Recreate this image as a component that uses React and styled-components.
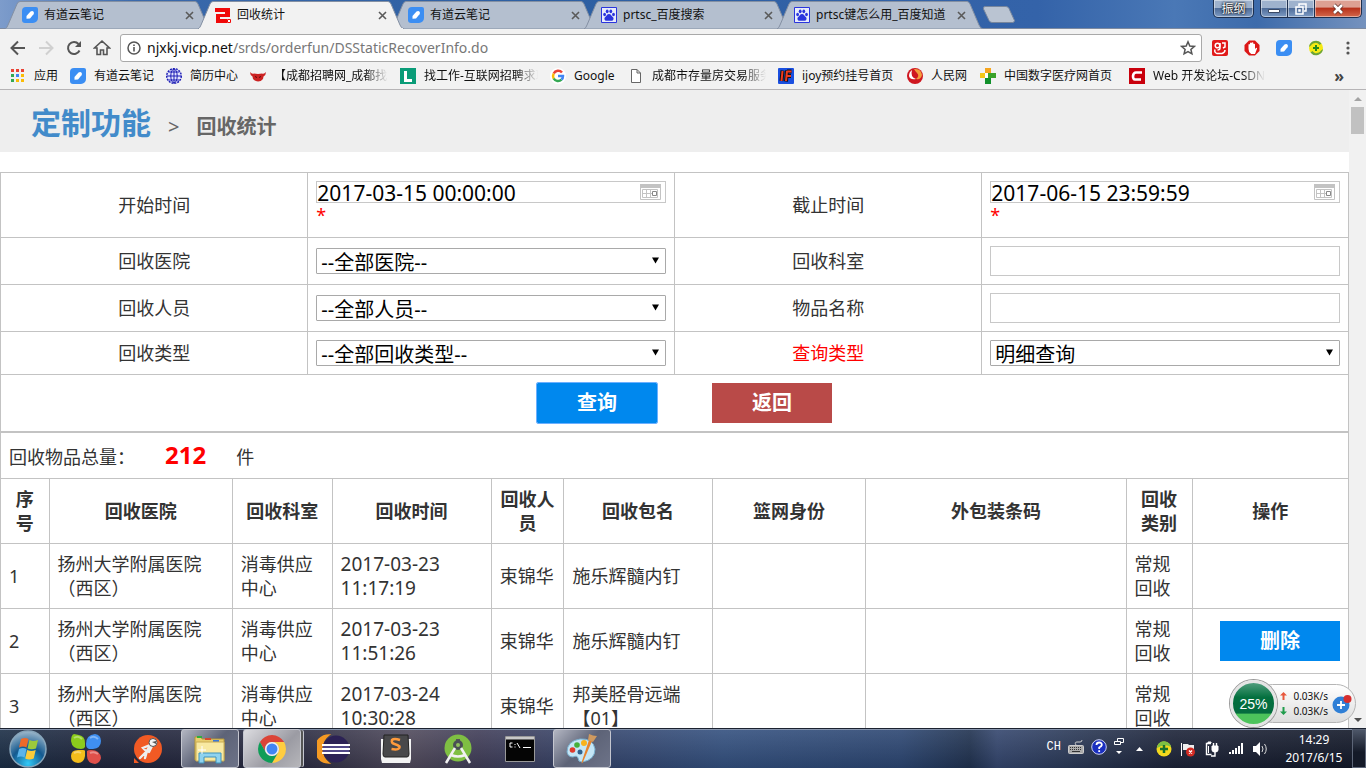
import React from "react";
import styled, { createGlobalStyle, css } from "styled-components";

const uiFont = '"Noto Sans", "Noto Sans CJK SC", sans-serif';

const GlobalStyle = createGlobalStyle`
  *, *::before, *::after { box-sizing: border-box; }
  body { margin: 0; font-family: ${uiFont}; color: #333; background: #fff; }
  button, input, select { font-family: inherit; margin: 0; }
  svg { display: block; flex: none; }
`;

const Screen = styled.div`
  position: relative;
  display: flex;
  flex-direction: column;
  height: 100vh;
  overflow: hidden;
`;

/* ---------- browser chrome ---------- */

const TitleBar = styled.header`
  display: flex;
  align-items: flex-start;
  height: 29px;
  padding: 1px 4px 0 5px;
  flex: none;
  background: linear-gradient(to right, #7d9ccb 0%, #3a69ab 10%, #2d5fa2 40%, #3463a9 76%, #4a78b6 86%, #3d6bab 92%, #7592be 100%);
  border-bottom: 1px solid #7d8aa0;
`;

const TabList = styled.nav`
  display: flex;
  height: 28px;
`;

const Tab = styled.div`
  position: relative;
  z-index: ${(p) => (p.$active ? 2 : 1)};
  display: flex;
  align-items: center;
  width: 206px;
  height: 28px;
  margin-right: -13px;
  padding: 0 14px 0 17px;
`;

const TabShape = styled.svg`
  position: absolute;
  inset: 0;
  z-index: -1;
`;

const TabTitle = styled.a`
  flex: 1;
  min-width: 0;
  margin-left: 6px;
  overflow: hidden;
  white-space: nowrap;
  font-size: 12px;
  line-height: 20px;
  color: #111;
  text-decoration: none;
`;

const IconButton = styled.button`
  display: flex;
  align-items: center;
  justify-content: center;
  width: ${(p) => p.$w || 28}px;
  height: ${(p) => p.$h || 28}px;
  padding: 0;
  border: 0;
  background: none;
  flex: none;
`;

const NewTab = styled(IconButton)`
  margin-left: 12px;
`;

const CaptionButtons = styled.div`
  display: flex;
  margin-left: auto;
  margin-top: -1px;
`;

const captionLook = css`
  display: flex;
  align-items: center;
  justify-content: center;
  height: 18px;
  padding: 0;
  color: #fff;
  border: 1px solid #1d2f4e;
  border-top: 0;
  box-shadow: inset 0 0 0 1px rgba(255, 255, 255, 0.45);
  background: linear-gradient(#9eb2cd 0 45%, #4f6d99 50%, #7d9bc4);
`;

const UserButton = styled.button`
  ${captionLook}
  width: 41px;
  margin-right: 7px;
  border-radius: 0 0 5px 5px;
  font-size: 12px;
  line-height: 16px;
  text-shadow: 0 0 2px #000, 0 0 3px #000;
`;

const CaptionButton = styled.button`
  ${captionLook}
  width: ${(p) => (p.$close ? 48 : 28)}px;
  margin-left: -1px;
  border-radius: ${(p) => (p.$close ? "0 0 5px 0" : p.$first ? "0 0 0 5px" : "0")};
  ${(p) => p.$close && "background: linear-gradient(#dda092 0 40%, #b8331c 50%, #d3684b);"}
`;

const Toolbar = styled.div`
  display: flex;
  align-items: center;
  height: 34px;
  padding: 3px 2px 0 4px;
  flex: none;
  background: #f2f2f2;
`;

const AddressBox = styled.div`
  display: flex;
  align-items: center;
  flex: 1;
  height: 28px;
  margin: 0 2px 0 4px;
  padding: 0 5px 0 6px;
  background: #fff;
  border: 1px solid #a9a9a9;
  border-radius: 3px;
`;

const Address = styled.a`
  flex: 1;
  margin-left: 6px;
  font-size: 14px;
  line-height: 24px;
  color: #777;
  text-decoration: none;
  white-space: nowrap;
`;

const Host = styled.span`
  color: #111;
`;

const Bookmarks = styled.nav`
  display: flex;
  align-items: center;
  height: 27px;
  padding: 0 22px 0 10px;
  flex: none;
  background: #f2f2f2;
  border-bottom: 1px solid #b6b4b6;
`;

const Bookmark = styled.a`
  display: flex;
  align-items: center;
  gap: 8px;
  width: ${(p) => p.$w}px;
  padding-right: 12px;
  color: #111;
  font-size: 12px;
  line-height: 20px;
  text-decoration: none;
  white-space: nowrap;
`;

const BookmarkText = styled.span`
  min-width: 0;
  overflow: hidden;
  ${(p) => p.$fade && "mask-image: linear-gradient(to right, #000 80%, transparent 100%);"}
`;

const MoreBookmarks = styled.button`
  margin-left: auto;
  padding: 0;
  border: 0;
  background: none;
  color: #444;
  font-size: 16px;
  font-weight: 700;
  line-height: 16px;
`;

/* ---------- web page ---------- */

const Viewport = styled.div`
  display: flex;
  flex: 1;
  min-height: 0;
`;

const Page = styled.main`
  flex: 1;
  min-width: 0;
  overflow: hidden;
`;

const ScrollTrack = styled.div`
  display: flex;
  flex-direction: column;
  align-items: center;
  width: 17px;
  background: #f1f1f1;
`;

const ScrollThumb = styled.div`
  width: 13px;
  height: 27px;
  background: #c1c1c1;
`;

const ScrollSpace = styled.div`
  flex: 1;
`;

const Crumbs = styled.div`
  display: flex;
  align-items: baseline;
  height: 62px;
  margin-bottom: 20px;
  padding: 13px 31px 0;
  background: #eee;
  color: #666;
  font-size: 20px;
  line-height: 40px;
`;

const CrumbHome = styled.a`
  margin-right: 17px;
  color: #428bca;
  font-size: 30px;
  font-weight: 700;
  text-decoration: none;
`;

const CrumbHere = styled.h1`
  margin: 0 0 0 17px;
  font-size: 20px;
  font-weight: 700;
`;

const SearchForm = styled.form`
  margin: 0;
`;

const Grid = styled.table`
  width: 100%;
  table-layout: fixed;
  border-collapse: collapse;
  font-size: 18px;
  line-height: 24px;

  th, td {
    border: 1px solid #c3c3c3;
    padding: 8px;
  }
`;

const FieldRow = styled.tr`
  height: ${(p) => p.$h}px;
`;

const LabelCell = styled.td`
  text-align: center;
  color: ${(p) => (p.$alert ? "#f00" : "#333")};
`;

const FieldCell = styled.td`
  && { padding-top: 0; padding-bottom: 0; }
`;

const fieldLook = css`
  display: block;
  width: 100%;
  border: 1px solid #c8c8c8;
  border-radius: 0;
  background: #fff;
  color: #000;
`;

const TextInput = styled.input`
  ${fieldLook}
  height: 30px;
  padding: 2px 6px;
  font-size: 20px;
`;

const Overlay = styled.div`
  position: relative;

  svg {
    position: absolute;
    right: ${(p) => p.$right}px;
    top: ${(p) => p.$top}px;
    pointer-events: none;
  }
`;

const DateInput = styled.input`
  ${fieldLook}
  height: 22px;
  padding: 1px 0 0;
  font-size: 21px;
`;

const Required = styled.div`
  height: 26px;
  color: #f00;
`;

const Select = styled.select`
  ${fieldLook}
  appearance: none;
  height: 26px;
  padding: 2px 20px 0 4px;
  border-color: #a9a9a9;
  border-radius: 1px;
  font-size: 20px;
  line-height: 24px;
`;

const Actions = styled.div`
  display: flex;
  justify-content: center;
  gap: 55px;
  padding-left: 20px;
`;

const ActionButton = styled.button`
  width: 120px;
  height: 40px;
  padding: 0;
  border: 0;
  background: ${(p) => (p.$danger ? "#b94a48" : "#08e")};
  color: #fff;
  font-size: 20px;
  font-weight: 700;
  line-height: 40px;
  ${(p) => p.$focused && "outline: 1px solid #6cb0ff; border-radius: 1px;"}
`;

const Records = styled(Grid)`
  th { font-weight: 700; }
`;

const Total = styled.strong`
  margin: 0 30px;
  color: #f00;
  font-size: 24px;
`;

const DateCell = styled.td`
  font-size: 19px;
`;

const OpCell = styled.td`
  && { padding-top: 0; padding-bottom: 0; }

  button { display: block; margin-left: auto; }
`;

/* ---------- network monitor ---------- */

const Monitor = styled.aside`
  position: absolute;
  right: 10px;
  bottom: 40px;
  display: flex;
  align-items: center;
  height: 49px;
`;

const MonitorPill = styled.div`
  display: flex;
  align-items: center;
  justify-content: flex-end;
  gap: 4px;
  width: 103px;
  height: 39px;
  margin-left: -24px;
  padding-right: 3px;
  border: 1px solid #b5b5b5;
  border-radius: 20px;
  background: linear-gradient(#fff, #ddd);
  color: #111;
  font-size: 10px;
  line-height: 15px;
`;

const Speed = styled.div`
  display: flex;
  align-items: center;
  gap: 6px;
`;

const Gauge = styled.div`
  position: relative;
  display: flex;
  align-items: center;
  justify-content: center;
  z-index: 1;
  width: 47px;
  height: 47px;
  border: 3px solid #e4e4e4;
  border-radius: 50%;
  box-shadow: 0 0 0 1px #999;
  background: linear-gradient(#4f9d7c, #04703f 35%, #056b3f 74%, #4cc35b 75%);
  color: #fff;
  font: 14px "Liberation Sans", sans-serif;
`;

/* ---------- taskbar ---------- */

const Taskbar = styled.footer`
  display: flex;
  height: 40px;
  flex: none;
  border-top: 1px solid #1b2230;
  box-shadow: inset 0 1px 0 #8795ad;
  background:
    linear-gradient(rgba(255, 255, 255, 0.1), rgba(0, 0, 0, 0.12)),
    linear-gradient(to right, #1b2e46 0, #20253c 8%, #2b2c42 22%, #504a5c 30%, #403d58 35%, #34456d 44%, #33507f 53%, #2c4672 66%, #203250 71%, #34466e 73%, #2b3a59 78%, #1c2338 86%, #121828 100%);
`;

const Start = styled.button`
  display: flex;
  align-items: center;
  justify-content: center;
  width: 55px;
  padding: 0;
  border: 0;
  background: none;
`;

const Task = styled.button`
  display: flex;
  align-items: center;
  justify-content: center;
  width: 58px;
  margin: 0 2px;
  padding: 0;
  border: 1px solid ${(p) => (p.$open ? "#c4c6cf" : "transparent")};
  border-radius: 3px;
  background: ${(p) =>
    p.$bright
      ? "linear-gradient(135deg, #dcdce0, #9b9ba3 60%, #b6b6ba)"
      : p.$open
      ? "linear-gradient(135deg, #b3b6c2, #5d6377 50%, #6d7388)"
      : "none"};
  ${(p) => p.$bright && "box-shadow: 3px 0 0 -1px #555, 4px 0 0 -1px #c4c6cf;"}
`;

const Tray = styled.div`
  display: flex;
  align-items: center;
  gap: 8px;
  margin-left: auto;
  color: #fff;
`;

const LanguageBar = styled.div`
  display: flex;
  align-items: center;
  gap: 7px;
  padding-bottom: 4px;
  font: 12px "Liberation Mono", monospace;
`;

const Clock = styled.time`
  width: 76px;
  font-size: 12px;
  line-height: 18px;
  text-align: center;
`;

const ShowDesktop = styled.button`
  align-self: stretch;
  width: 14px;
  margin-left: -8px;
  padding: 0;
  border: 1px solid #5d6678;
  background: linear-gradient(#4d5668, #141a28 60%);
`;

/* ---------- drawings ---------- */

const NoteIcon = () => (
  <svg width="16" height="16" viewBox="0 0 16 16">
    <path d="M4 0h10a2 2 0 0 1 2 2v9a5 5 0 0 1-5 5H3a3 3 0 0 1-3-3V4a4 4 0 0 1 4-4z" fill="#3b8ef3" />
    <path d="M4.500 9 8.500 4.500q2-1 3 .2 1 1.300 0 2.600L8 11.500l-3.500.3z" fill="#fff" />
  </svg>
);

const StampIcon = () => (
  <svg width="16" height="16" viewBox="0 0 16 16">
    <path d="M0 1h15v9H5v2h7v4H1V7h9V5H0z" fill="#f00a0a" />
    <path d="M12.500 12.500h3v3h-3z" fill="#fff" stroke="#f00a0a" />
  </svg>
);

const PawIcon = () => (
  <svg width="16" height="16" viewBox="0 0 16 16">
    <path d="M.5.5h15v15H.5z" fill="#e8ecfb" stroke="#2a35dd" />
    <g fill="#2a35dd">
      <ellipse cx="3.600" cy="7.500" rx="1.400" ry="1.800" />
      <ellipse cx="6.200" cy="4.300" rx="1.400" ry="1.900" />
      <ellipse cx="9.800" cy="4.300" rx="1.400" ry="1.900" />
      <ellipse cx="12.500" cy="7.500" rx="1.400" ry="1.800" />
      <path d="M8 7c2 0 2.500 2 4 3.300 1.300 1.700.200 3.700-1.800 3.500-1.500-.2-2.900-.2-4.400 0-2 .2-3.100-1.800-1.800-3.500C5.500 9 6 7 8 7z" />
    </g>
  </svg>
);

const CloseIcon = () => (
  <svg width="9" height="9" viewBox="0 0 9 9">
    <path d="M1 1l7 7M8 1 1 8" stroke="#5a5a5a" strokeWidth="1.600" />
  </svg>
);

const TabBackground = ({ active }) => (
  <TabShape width="206" height="28" viewBox="0 0 206 28" aria-hidden="true">
    <path
      d="M0 28Q2 27 3 24L12 3Q13 .5 15 .5H190Q192 .5 193 3L202 24Q203 27 206 28z"
      fill={active ? "#f2f2f2" : "#b4bfcf"}
      stroke="#8490a3"
    />
    {active && <path d="M1 28h204" stroke="#f2f2f2" strokeWidth="2" />}
  </TabShape>
);

const navStroke = { fill: "none", stroke: "#555", strokeWidth: 2 };

const BackIcon = () => (
  <svg width="16" height="16" viewBox="0 0 16 16"><path d="M15 8H2M8 1.500 1.500 8 8 14.500" {...navStroke} /></svg>
);
const ForwardIcon = () => (
  <svg width="16" height="16" viewBox="0 0 16 16"><path d="M1 8h13M8 1.500 14.500 8 8 14.500" {...navStroke} stroke="#d0d0d0" /></svg>
);
const ReloadIcon = () => (
  <svg width="16" height="16" viewBox="0 0 16 16">
    <path d="M13.500 10.500A6 6 0 1 1 12.500 4" {...navStroke} />
    <path d="M15 1v6H9z" fill="#555" />
  </svg>
);
const HomeIcon = () => (
  <svg width="18" height="18" viewBox="0 0 18 18"><path d="M4 9v6.500h3.500V11h3v4.500H14V9h2.500L9 2 1.500 9z" {...navStroke} strokeWidth="1.600" /></svg>
);
const InfoIcon = () => (
  <svg width="14" height="14" viewBox="0 0 14 14">
    <circle cx="7" cy="7" r="6" fill="none" stroke="#555" strokeWidth="1.500" />
    <path d="M7 6v4.500M7 3.500v1.500" stroke="#555" strokeWidth="1.600" />
  </svg>
);
const StarIcon = () => (
  <svg width="16" height="16" viewBox="0 0 16 16">
    <path d="M8 1.800 9.800 6l4.500.4-3.400 3 1 4.400L8 11.500l-3.900 2.300 1-4.400-3.400-3L6.200 6z" fill="none" stroke="#555" strokeWidth="1.500" />
  </svg>
);
const WeiboIcon = () => (
  <svg width="16" height="16" viewBox="0 0 16 16">
    <rect width="16" height="16" rx="2" fill="#e11a1a" />
    <g fill="none" stroke="#fff" strokeWidth="1.500">
      <circle cx="5.500" cy="5.500" r="2.300" />
      <path d="M8 3v5q0 2-2.500 2M3 9.500q-1 3 2 4h5q3-1 3-3.500M10 3h3v4l-2 1" />
    </g>
  </svg>
);
const StopHandIcon = () => (
  <svg width="16" height="16" viewBox="0 0 16 16">
    <path d="M5 .500h6L15.500 5v6L11 15.500H5L.500 11V5z" fill="#dc1717" />
    <path d="M4.500 9V4.500q.8-1 1.500 0V3q.8-1 1.700 0v-.5q1-.8 1.700.3V4q1-.8 1.600.2v5l1-1.400q1.500 0 1 1L11 14H7.200Q4.500 12.500 4.500 9z" fill="#fff" />
  </svg>
);
const SafeIcon = () => (
  <svg width="16" height="16" viewBox="0 0 16 16">
    <circle cx="8" cy="8" r="7" fill="#f5ea13" />
    <path d="M1 7a7 7 0 0 1 12.500-3.500L11.500 5A5 5 0 0 0 3 5.500zM15 9a7 7 0 0 1-12.500 3.500L4.500 11a5 5 0 0 0 8.500-.5z" fill="#6aa33b" />
    <path d="M8 5v6M5 8h6" stroke="#258a1e" strokeWidth="2" />
  </svg>
);
const MenuIcon = () => (
  <svg width="4" height="16" viewBox="0 0 4 16" fill="#555"><circle cx="2" cy="3" r="1.600" /><circle cx="2" cy="8" r="1.600" /><circle cx="2" cy="13" r="1.600" /></svg>
);

const appColors = ["#ea4335", "#ea4335", "#ea4335", "#34a853", "#4285f4", "#fbbc05", "#34a853", "#fbbc05", "#fbbc05"];
const AppsIcon = () => (
  <svg width="16" height="16" viewBox="0 0 16 16">
    {appColors.map((c, i) => (
      <rect key={i} x={1 + (i % 3) * 5} y={1 + Math.floor(i / 3) * 5} width="3" height="3" fill={c} />
    ))}
  </svg>
);
const GlobeIcon = () => (
  <svg width="16" height="16" viewBox="0 0 16 16" fill="none" stroke="#1c1cb4">
    <circle cx="8" cy="8" r="7.300" fill="#e4e6ff" strokeDasharray="2 1" strokeWidth="1.400" />
    <ellipse cx="8" cy="8" rx="3.200" ry="7" />
    <path d="M1 8h14M2.500 4h11M2.500 12h11M8 1v14" />
  </svg>
);
const BullIcon = () => (
  <svg width="16" height="16" viewBox="0 0 16 16">
    <path d="M0 4q2 2.500 4 1.500l4 .5 4-.5q2 1 4-1.500 0 3-2.500 4.500L13 11q-2 2.500-5 2.500T3 11l-.5-2.500Q0 7 0 4z" fill="#cc2222" />
    <path d="M5 8.500l2 1M11 8.500 9 9.500" stroke="#5c0a0a" />
  </svg>
);
const LagouIcon = () => (
  <svg width="16" height="16" viewBox="0 0 16 16"><path d="M0 0h16v16H0z" fill="#0a9c78" /><path d="M5.500 3v9.500H12" stroke="#fff" strokeWidth="3" fill="none" /></svg>
);
const GoogleIcon = () => (
  <svg width="16" height="16" viewBox="0 0 16 16" fill="none" strokeWidth="2.500">
    <circle cx="8" cy="8" r="8" fill="#fff" />
    <path d="M12 4.500A5 5 0 0 0 3.700 5.500" stroke="#ea4335" />
    <path d="M3.700 5.500a5 5 0 0 0 0 5" stroke="#fbbc05" />
    <path d="M3.700 10.500a5 5 0 0 0 7.800 1.200" stroke="#34a853" />
    <path d="M11.500 11.700A5 5 0 0 0 13 8H8" stroke="#4285f4" />
  </svg>
);
const DocIcon = () => (
  <svg width="16" height="16" viewBox="0 0 16 16"><path d="M3.500 1.500h5.500l3.500 3.500v9.500h-9zM9 1.500V5h3.500" fill="#fff" stroke="#666" /></svg>
);
const IjoyIcon = () => (
  <svg width="16" height="16" viewBox="0 0 16 16">
    <rect width="16" height="16" rx="1" fill="#1a4fe0" />
    <path d="M4.500 2.500 3.500 13M9 2.500 8 13.500M9 3.500h4.500M9 8h4" stroke="#111" strokeWidth="4" />
    <path d="M4.500 3 3.500 13M9 3 8 13M9 3.500h4.500M9 8h4" stroke="#f03a1c" strokeWidth="2" />
  </svg>
);
const PeopleIcon = () => (
  <svg width="16" height="16" viewBox="0 0 16 16">
    <circle cx="8" cy="8" r="8" fill="#cf1720" />
    <path d="M7 1q7-1 8 6-1 5-6 4 4-3 1-6Q8 3 7 1z" fill="#f39c3c" />
    <path d="M5 2q-2 7 4 9-6 1-7-3 0-4 3-6z" fill="#fff" />
  </svg>
);
const CrossIcon = () => (
  <svg width="16" height="16" viewBox="0 0 16 16">
    <path d="M5 0h6v5H5z" fill="#f7a51c" /><path d="M0 5h8v5H0z" fill="#f3c818" />
    <path d="M8 5h8v5H8z" fill="#3aa22a" /><path d="M5 10h6v6H5z" fill="#11902b" />
    <path d="M5 5h3v5H5z" fill="#fff" />
  </svg>
);
const CsdnIcon = () => (
  <svg width="16" height="16" viewBox="0 0 16 16"><path d="M0 0h16v16H0z" fill="#c9000c" /><path d="M13 4.500H7q-2.500 0-3 3.500 0 3.500 2 3.500h6" fill="none" stroke="#fff" strokeWidth="2.600" /></svg>
);

const CalendarIcon = () => (
  <svg width="21" height="16" viewBox="0 0 21 16" fill="none" stroke="#c3c3c3">
    <path d="M0 0h21v4H0z" fill="#c3c3c3" stroke="none" />
    <path d="M.5 3.500h20v12H.5zM2.500 5.500h15v8h-15zM2.500 9.500h15M6.500 5.500v8M10.500 5.500v8" />
    <path d="M12.500 7.500h4v4h-4z" stroke="#888" fill="#fff" />
  </svg>
);
const DropArrow = () => (
  <svg width="7" height="7" viewBox="0 0 7 7"><path d="M0 .5h7L3.500 6.500z" fill="#000" /></svg>
);
const ScrollArrow = ({ down }) => (
  <svg width="17" height="17" viewBox="0 0 17 17">
    <path d={down ? "M5 7h8l-4 4z" : "M5 11h8L9 7z"} fill={down ? "#505050" : "#a3a3a3"} />
  </svg>
);

const WindowsOrb = () => (
  <svg width="38" height="38" viewBox="0 0 38 38">
    <defs>
      <radialGradient id="orb" cx=".5" cy=".9" r=".9">
        <stop offset="0" stopColor="#31c9f7" /><stop offset=".5" stopColor="#14598f" /><stop offset="1" stopColor="#9fb9cc" />
      </radialGradient>
    </defs>
    <circle cx="19" cy="19" r="18" fill="url(#orb)" stroke="#88a6bb" strokeWidth="1.500" />
    <path d="M12 9q4-2 7.500 0l-2 8.500q-3.500-2-7.500 0z" fill="#ee6a2a" />
    <path d="M20.500 10q4 2 8.500 0l-2 8.500q-4.500 1.500-8.500 0z" fill="#9cca3c" />
    <path d="M10 19q4-2 7.500 0l-2 8.500q-3.500-2-7.500 0z" fill="#5bb4ea" />
    <path d="M18.200 20q4 2 8.500 0l-2 8.500q-4.500 2-8.500 0z" fill="#fccc3a" />
  </svg>
);
const PetalsIcon = () => (
  <svg width="32" height="32" viewBox="0 0 32 32">
    <path d="M1 8Q1 2 4 1l5 1q6 1 6 8v4q-1 2-4 2Q2 16 1 8z" fill="#8ccc1c" />
    <path d="M16 11q0-9 9-10 6 1 6 7 0 7-8 8h-4q-3-1-3-5z" fill="#3f8ff0" />
    <path d="M15 18v5q-1 7-7 7-7-1-7-7 0-6 7-6h5q2 0 2 1z" fill="#f4bd1b" />
    <path d="M17 18q1-1 4-1 9 0 10 8-1 5-6 6-8-1-8-8z" fill="#e0504a" />
    <path d="M4 5q4-3 8 1M20 5q4-3 8 1M4 20q4-2 7 0M20 20q4-2 8 1" stroke="#fff" strokeOpacity=".35" strokeWidth="2" fill="none" />
  </svg>
);
const PostmanIcon = () => (
  <svg width="30" height="30" viewBox="0 0 30 30">
    <circle cx="15" cy="15" r="14" fill="#f15a24" /><path d="M1 24v5h5z" fill="#f15a24" />
    <g stroke="#eee" strokeWidth="2.400" strokeLinecap="round" fill="none">
      <path d="M17 11 10 14l2 2M17 12l-4 6-6 6M14 17l-2 7M19 12l-3 6" />
    </g>
    <circle cx="20" cy="8.500" r="4" fill="#f5f5f5" stroke="#555" /><path d="m19 8 4-1v3z" fill="#555" />
  </svg>
);
const ExplorerIcon = () => (
  <svg width="34" height="32" viewBox="0 0 34 32">
    <path d="M2 4h6l1 2h22v21H2z" fill="#e9ce6f" stroke="#b49639" />
    <path d="M4 3h5v2H4z" fill="#2fae3e" /><path d="M12 5h6v2h-6z" fill="#d6482e" /><path d="M20 7h6v2h-6z" fill="#3b78d8" />
    <path d="M3 9h28v19H3z" fill="#f8e9a2" stroke="#c9ac55" />
    <path d="M6 30V20h22v10h-5v-6H11v6z" fill="#8fd3ef" stroke="#3f93bd" />
    <path d="M9 13v8M5 17h8" stroke="#fff" />
  </svg>
);
const ChromeIcon = () => (
  <svg width="32" height="32" viewBox="0 0 32 32">
    <path d="M3.900 9A14 14 0 0 1 28.100 9L16 9A7 7 0 0 0 9.900 19.500Z" fill="#db4437" />
    <path d="M28.100 9A14 14 0 0 1 16 30L22.100 19.500A7 7 0 0 0 16 9Z" fill="#ffcd40" />
    <path d="M16 30A14 14 0 0 1 3.900 9L9.900 19.500A7 7 0 0 0 22.100 19.500Z" fill="#0f9d58" />
    <circle cx="16" cy="16" r="7" fill="#f1f1f1" /><circle cx="16" cy="16" r="5.500" fill="#4285f4" />
  </svg>
);
const EclipseIcon = () => (
  <svg width="34" height="32" viewBox="0 0 34 32">
    <path d="M12 2A14 14 0 0 0 12 30Q5 25 5 16T12 2z" fill="#f59a23" stroke="#f59a23" strokeWidth="1.500" />
    <circle cx="19" cy="16" r="13.500" fill="#2c2255" />
    <path d="M5 12h28M5 16h28M5 20h28" stroke="#fff" strokeWidth="2" />
    <path d="M6 14h26M6 18h26" stroke="#5d5599" strokeWidth="1.500" />
  </svg>
);
const SublimeIcon = () => (
  <svg width="32" height="30" viewBox="0 0 32 30">
    <path d="M1 5h30v20l-1 4H2l-1-4z" fill="#f3f3f3" /><path d="M4 1h24l1 19q0 3-2 3H5q-2 0-2-3z" fill="#48484a" stroke="#222" />
    <path d="M20 6q-6-2-8 0-1 3 2.500 4t5 2.500q.5 4-8 2.500" stroke="#ff9a3c" strokeWidth="2.500" fill="none" />
  </svg>
);
const StudioIcon = () => (
  <svg width="30" height="30" viewBox="0 0 30 30">
    <circle cx="15" cy="14" r="13.500" fill="#7fbf43" />
    <path d="M15 5v4" stroke="#555" strokeWidth="4" /><circle cx="15" cy="11" r="3.500" fill="#8fbf5b" stroke="#4a4f55" strokeWidth="3" />
    <path d="m12 14-9 15M18 14l9 15M8 21q7 3 14 0" stroke="#f1f1f1" strokeWidth="2.500" fill="none" />
  </svg>
);
const ConsoleIcon = () => (
  <svg width="30" height="26" viewBox="0 0 30 26">
    <path d="M.5.500h29v25H.5z" fill="#050505" stroke="#999" /><path d="M1 1h28v2.500H1z" fill="#c9c9c9" />
    <path d="M7.500 7H5v4h2.500M10 8v1M10 10.500v1M12 7l3 5M18 11.500h8" stroke="#fff" fill="none" />
  </svg>
);
const PaintIcon = () => (
  <svg width="32" height="32" viewBox="0 0 32 32">
    <path d="M14 6q13-1 15 10 0 11-13 13-4 0-4-4-1-3-5-1-5 0-6-5Q1 8 14 6z" fill="#c4e6f6" stroke="#79b0cf" />
    <circle cx="6.500" cy="17" r="2.800" fill="#e03b2c" /><circle cx="11" cy="12" r="2.800" fill="#45b03b" />
    <circle cx="18" cy="10" r="3" fill="#f8b21c" /><circle cx="14" cy="19" r="2.500" fill="#30618d" />
    <path d="m26 8-9 21q-2 3-1-1l7-21z" fill="#e8832c" /><path d="m22 7 1-6q4 2 8 2l-4 6z" fill="#cf9a5f" />
  </svg>
);

const KeyboardIcon = () => (
  <svg width="16" height="16" viewBox="0 0 16 16" fill="none" stroke="#ccc">
    <path d="M8 6Q6 3 9 3h3q2 0 2-2" /><rect x=".5" y="6.500" width="15" height="8" rx="1" fill="#aaa" />
    <path d="M2 8.500h12M2 10.500h12" stroke="#333" strokeDasharray="1 1" /><path d="M4 12.500h8" stroke="#333" />
  </svg>
);
const HelpIcon = () => (
  <svg width="16" height="16" viewBox="0 0 16 16">
    <circle cx="8" cy="8" r="7.300" fill="#1a2fc0" stroke="#c9cff2" />
    <path d="M5.500 6q0-2.500 2.700-2.500T10.800 6Q10.500 7.500 8.200 8.500V10M8.200 11.300v1.700" stroke="#fff" strokeWidth="1.800" fill="none" />
  </svg>
);
const RestoreBarIcon = () => (
  <svg width="10" height="20" viewBox="0 0 10 20">
    <path d="M3.500 4V1.500h6v4H7M.5 4.500h6v3h-6z" fill="none" stroke="#fff" /><path d="M2 14h6l-3 3z" fill="#fff" />
  </svg>
);
const ShowHiddenIcon = () => (
  <svg width="16" height="16" viewBox="0 0 16 16"><path d="M4 10h7L7.500 6z" fill="#fff" /></svg>
);
const TraySafeIcon = () => (
  <svg width="16" height="16" viewBox="0 0 16 16">
    <circle cx="8" cy="8" r="7.500" fill="#f3d91d" /><path d="M1 7a7 7 0 0 1 10-6q4 2 4 5-6-4-14 1z" fill="#7bc043" />
    <path d="M8 4v8M4 8h8" stroke="#17722a" strokeWidth="2.500" />
  </svg>
);
const FlagIcon = () => (
  <svg width="16" height="16" viewBox="0 0 16 16">
    <path d="M1 2h1v13H1z" fill="#fff" /><path d="M3 3h5l1 1h5v6H8L7 9H3z" fill="#eee" />
    <circle cx="10.500" cy="11" r="4.500" fill="#d22b23" /><path d="m9 9.500 3 3m0-3-3 3" stroke="#fff" strokeWidth="1.400" />
  </svg>
);
const PlugIcon = () => (
  <svg width="16" height="16" viewBox="0 0 16 16" fill="none" stroke="#fff">
    <path d="M4 1h3v1H4z" fill="#fff" /><path d="M7 2.500H2.500v11h5" strokeWidth="1.400" /><path d="M4.500 5v7" />
    <path d="M8 5h6v4q0 2-3 2t-3-2z" fill="#fff" /><path d="M9.500 2v3M12.500 2v3M11 11v4H7" strokeWidth="1.400" />
  </svg>
);
const SignalIcon = () => (
  <svg width="16" height="16" viewBox="0 0 16 16" fill="#fff"><path d="M1 11h2v2H1zM4 9h2v4H4zM7 7h2v6H7zM10 5h2v8h-2zM13 2h2v11h-2z" /></svg>
);
const SpeakerIcon = () => (
  <svg width="16" height="16" viewBox="0 0 16 16">
    <path d="M1 5h3l4-4v14l-4-4H1z" fill="#fff" /><path d="M10 5q2 3 0 6M12.500 3q3.500 5 0 10" stroke="#ddd" fill="none" />
  </svg>
);
const SpeedArrow = ({ up }) => (
  <svg width="7" height="8" viewBox="0 0 7 8">
    <path d={up ? "M3.500 0 7 3.500H4.500V8h-2V3.500H0z" : "M3.500 8 0 4.500h2.500V0h2v4.500H7z"} fill={up ? "#e8583d" : "#1f9c4c"} />
  </svg>
);
const PlusBadge = () => (
  <svg width="20" height="20" viewBox="0 0 20 20">
    <circle cx="9" cy="11" r="8.500" fill="#2f7fd6" /><path d="M9 7v8M5 11h8" stroke="#fff" strokeWidth="1.800" />
    <circle cx="15.500" cy="5" r="4" fill="#d62f2f" />
  </svg>
);

/* ---------- data ---------- */

const tabs = [
  { title: "有道云笔记", Icon: NoteIcon },
  { title: "回收统计", Icon: StampIcon, active: true },
  { title: "有道云笔记", Icon: NoteIcon },
  { title: "prtsc_百度搜索", Icon: PawIcon },
  { title: "prtsc键怎么用_百度知道", Icon: PawIcon },
];

const bookmarks = [
  { text: "应用", w: 60, Icon: AppsIcon },
  { text: "有道云笔记", w: 96, Icon: NoteIcon },
  { text: "简历中心", w: 84, Icon: GlobeIcon },
  { text: "【成都招聘网_成都找工作", w: 150, Icon: BullIcon, fade: true },
  { text: "找工作-互联网招聘求职", w: 150, Icon: LagouIcon, fade: true },
  { text: "Google", w: 78, Icon: GoogleIcon },
  { text: "成都市存量房交易服务", w: 150, Icon: DocIcon, fade: true },
  { text: "ijoy预约挂号首页", w: 129, Icon: IjoyIcon },
  { text: "人民网", w: 73, Icon: PeopleIcon },
  { text: "中国数字医疗网首页", w: 149, Icon: CrossIcon },
  { text: "Web 开发论坛-CSDN", w: 150, Icon: CsdnIcon, fade: true },
];

const columns = [
  ["序号", 3.6],
  ["回收医院", 13.6],
  ["回收科室", 7.4],
  ["回收时间", 11.8],
  ["回收人员", 5.4],
  ["回收包名", 11.0],
  ["篮网身份", 11.4],
  ["外包装条码", 19.3],
  ["回收类别", 4.9],
  ["操作", 11.6],
];

const records = [
  { time: "2017-03-23 11:17:19", pack: "施乐辉髓内钉" },
  { time: "2017-03-23 11:51:26", pack: "施乐辉髓内钉", removable: true },
  { time: "2017-03-24 10:30:28", pack: "邦美胫骨远端【01】" },
];

const tasks = [
  { name: "云桌面", Icon: PetalsIcon },
  { name: "Postman", Icon: PostmanIcon },
  { name: "资源管理器", Icon: ExplorerIcon, open: true },
  { name: "Chrome", Icon: ChromeIcon, open: true, bright: true },
  { name: "Eclipse", Icon: EclipseIcon },
  { name: "Sublime Text", Icon: SublimeIcon },
  { name: "Android Studio", Icon: StudioIcon },
  { name: "命令提示符", Icon: ConsoleIcon },
  { name: "画图", Icon: PaintIcon, open: true },
];

/* ---------- composed parts ---------- */

const Label = ({ id, children, alert }) => (
  <LabelCell $alert={alert}>
    <label htmlFor={id}>{children}</label>
  </LabelCell>
);

const DateField = ({ id, value }) => (
  <FieldCell>
    <Overlay $right={5} $top={3}>
      <DateInput id={id} defaultValue={value} />
      <CalendarIcon />
    </Overlay>
    <Required>*</Required>
  </FieldCell>
);

const SelectField = ({ id, option }) => (
  <FieldCell>
    <Overlay $right={7} $top={9}>
      <Select id={id}>
        <option>{option}</option>
      </Select>
      <DropArrow />
    </Overlay>
  </FieldCell>
);

const TextField = ({ id }) => (
  <FieldCell>
    <TextInput id={id} type="text" />
  </FieldCell>
);

export default function App() {
  return (
    <Screen>
      <GlobalStyle />
      <TitleBar>
        <TabList>
          {tabs.map(({ title, Icon, active }, i) => (
            <Tab key={i} $active={active}>
              <TabBackground active={active} />
              <Icon />
              <TabTitle href="#">{title}</TabTitle>
              <IconButton $w={16} $h={16} aria-label="关闭标签页">
                <CloseIcon />
              </IconButton>
            </Tab>
          ))}
        </TabList>
        <NewTab $w={34} aria-label="新标签页">
          <svg width="34" height="18" viewBox="0 0 34 18">
            <path d="M3 .5h21q2 0 3 2l5.500 12q0 2-2 2H10q-2 0-3-2L1.500 3Q1 .5 3 .5z" fill="#bac4d2" stroke="#77869d" />
          </svg>
        </NewTab>
        <CaptionButtons>
          <UserButton>振纲</UserButton>
          <CaptionButton $first aria-label="最小化">
            <svg width="12" height="12" viewBox="0 0 12 12"><path d="M.5 6.500h11v3H.5z" fill="#fff" stroke="#3a4a66" /></svg>
          </CaptionButton>
          <CaptionButton aria-label="还原">
            <svg width="12" height="12" viewBox="0 0 12 12" fill="none" stroke="#fff" strokeWidth="1.500"><path d="M4 3V1h7v7H9M1 4h7v7H1z" /><path d="M4 7h1v1H4z" /></svg>
          </CaptionButton>
          <CaptionButton $close aria-label="关闭">
            <svg width="12" height="12" viewBox="0 0 12 12"><path d="m2 2 8 8m0-8-8 8" stroke="#5a2a22" strokeWidth="4" /><path d="m2 2 8 8m0-8-8 8" stroke="#fff" strokeWidth="2.600" /></svg>
          </CaptionButton>
        </CaptionButtons>
      </TitleBar>

      <Toolbar>
        <IconButton aria-label="后退"><BackIcon /></IconButton>
        <IconButton aria-label="前进"><ForwardIcon /></IconButton>
        <IconButton aria-label="重新加载"><ReloadIcon /></IconButton>
        <IconButton aria-label="主页"><HomeIcon /></IconButton>
        <AddressBox>
          <InfoIcon />
          <Address href="#">
            <Host>njxkj.vicp.net</Host>/srds/orderfun/DSStaticRecoverInfo.do
          </Address>
          <StarIcon />
        </AddressBox>
        <IconButton $w={32} aria-label="微博"><WeiboIcon /></IconButton>
        <IconButton $w={32} aria-label="广告拦截"><StopHandIcon /></IconButton>
        <IconButton $w={32} aria-label="有道云笔记"><NoteIcon /></IconButton>
        <IconButton $w={32} aria-label="安全卫士"><SafeIcon /></IconButton>
        <IconButton $w={32} aria-label="菜单"><MenuIcon /></IconButton>
      </Toolbar>

      <Bookmarks>
        {bookmarks.map(({ text, w, Icon, fade }) => (
          <Bookmark key={text} href="#" $w={w}>
            <Icon />
            <BookmarkText $fade={fade}>{text}</BookmarkText>
          </Bookmark>
        ))}
        <MoreBookmarks>»</MoreBookmarks>
      </Bookmarks>

      <Viewport>
        <Page>
          <Crumbs>
            <CrumbHome href="#">定制功能</CrumbHome>
            <span>&gt;</span>
            <CrumbHere>回收统计</CrumbHere>
          </Crumbs>

          <SearchForm onSubmit={(e) => e.preventDefault()}>
            <Grid>
              <colgroup>
                <col width="22.8%" />
                <col width="27.2%" />
                <col width="22.8%" />
                <col width="27.2%" />
              </colgroup>
              <tbody>
                <FieldRow $h={65}>
                  <Label id="start">开始时间</Label>
                  <DateField id="start" value="2017-03-15 00:00:00" />
                  <Label id="end">截止时间</Label>
                  <DateField id="end" value="2017-06-15 23:59:59" />
                </FieldRow>
                <FieldRow $h={47}>
                  <Label id="hospital">回收医院</Label>
                  <SelectField id="hospital" option="--全部医院--" />
                  <Label id="dept">回收科室</Label>
                  <TextField id="dept" />
                </FieldRow>
                <FieldRow $h={47}>
                  <Label id="person">回收人员</Label>
                  <SelectField id="person" option="--全部人员--" />
                  <Label id="item">物品名称</Label>
                  <TextField id="item" />
                </FieldRow>
                <FieldRow $h={43}>
                  <Label id="kind">回收类型</Label>
                  <SelectField id="kind" option="--全部回收类型--" />
                  <Label id="query" alert>查询类型</Label>
                  <SelectField id="query" option="明细查询" />
                </FieldRow>
                <FieldRow $h={57}>
                  <td colSpan={4}>
                    <Actions>
                      <ActionButton type="submit" $focused>查询</ActionButton>
                      <ActionButton type="button" $danger>返回</ActionButton>
                    </Actions>
                  </td>
                </FieldRow>
              </tbody>
            </Grid>
          </SearchForm>

          <Records>
            <colgroup>
              {columns.map(([name, share]) => (
                <col key={name} width={`${share}%`} />
              ))}
            </colgroup>
            <tbody>
              <FieldRow $h={46}>
                <td colSpan={10}>
                  回收物品总量：<Total>212</Total>件
                </td>
              </FieldRow>
              <tr>
                {columns.map(([name]) => (
                  <th key={name} scope="col">{name}</th>
                ))}
              </tr>
              {records.map(({ time, pack, removable }, i) => (
                <tr key={time}>
                  <td>{i + 1}</td>
                  <td>扬州大学附属医院（西区）</td>
                  <td>消毒供应中心</td>
                  <DateCell>{time}</DateCell>
                  <td>束锦华</td>
                  <td>{pack}</td>
                  <td />
                  <td />
                  <td>常规回收</td>
                  <OpCell>{removable && <ActionButton type="button">删除</ActionButton>}</OpCell>
                </tr>
              ))}
            </tbody>
          </Records>
        </Page>
        <ScrollTrack aria-hidden="true">
          <ScrollArrow />
          <ScrollThumb />
          <ScrollSpace />
          <ScrollArrow down />
        </ScrollTrack>
      </Viewport>

      <Monitor>
        <Gauge>25%</Gauge>
        <MonitorPill>
          <div>
            <Speed><SpeedArrow up />0.03K/s</Speed>
            <Speed><SpeedArrow />0.03K/s</Speed>
          </div>
          <PlusBadge />
        </MonitorPill>
      </Monitor>

      <Taskbar>
        <Start aria-label="开始"><WindowsOrb /></Start>
        {tasks.map(({ name, Icon, open, bright }) => (
          <Task key={name} aria-label={name} $open={open} $bright={bright}>
            <Icon />
          </Task>
        ))}
        <Tray>
          <LanguageBar>
            CH
            <KeyboardIcon />
            <HelpIcon />
            <RestoreBarIcon />
          </LanguageBar>
          <ShowHiddenIcon />
          <TraySafeIcon />
          <FlagIcon />
          <PlugIcon />
          <SignalIcon />
          <SpeakerIcon />
          <Clock>
            14:29
            <br />
            2017/6/15
          </Clock>
          <ShowDesktop aria-label="显示桌面" />
        </Tray>
      </Taskbar>
    </Screen>
  );
}
